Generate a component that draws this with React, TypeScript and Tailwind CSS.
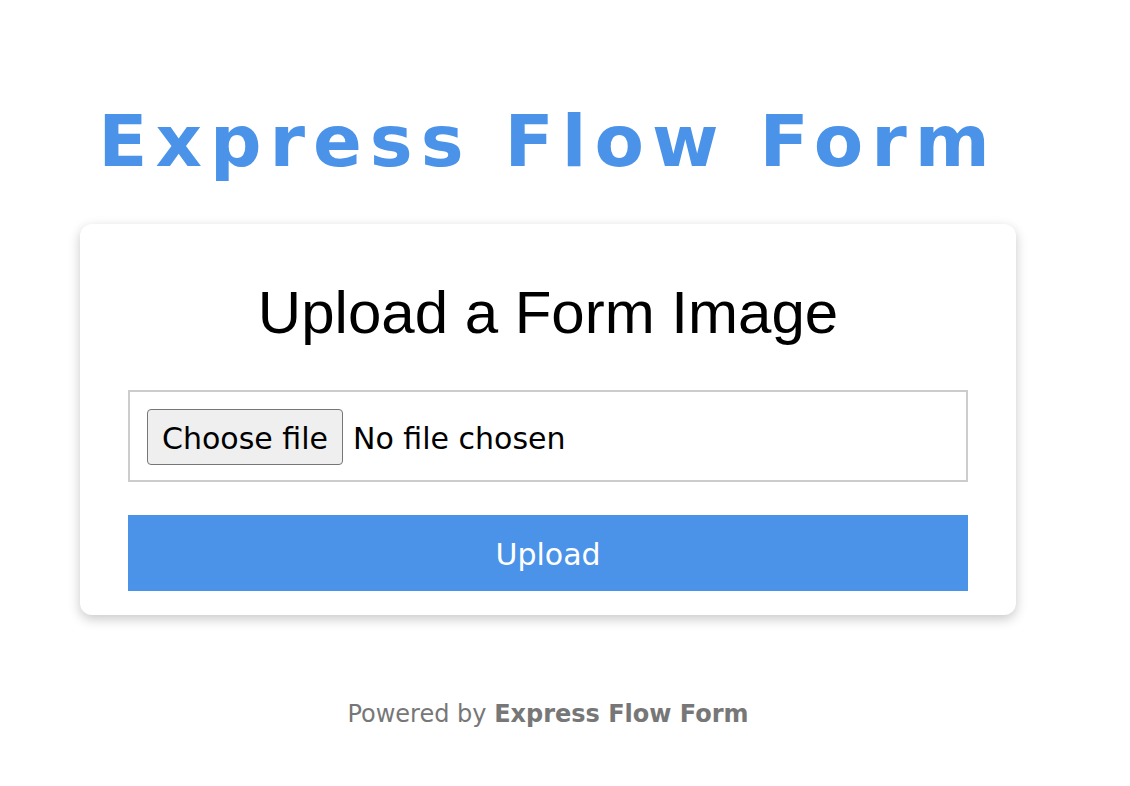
export default function App() {
  return (
    <div className="min-h-screen bg-white">
      <div className="ml-[80px] w-[936px] pt-[99px]">
        {/* Title */}
        <h1 className="mb-[41px] text-center text-[72px] leading-[84px] font-bold tracking-[8px] text-[#4a93e9] [font-family:'DejaVu_Sans',Verdana,sans-serif]">
          Express Flow Form
        </h1>

        {/* Upload card */}
        <div className="rounded-[12px] bg-white px-[48px] pt-[54px] pb-[24px] shadow-[0_4px_12px_rgba(0,0,0,0.22)]">
          <h2 className="text-center text-[60px] leading-[69px] font-normal text-black [font-family:'Liberation_Sans',Arial,sans-serif]">
            Upload a Form Image
          </h2>

          <div className="mt-[43px] flex h-[92px] items-center border-2 border-[#cccccc] px-[17px] pt-[2px] [font-family:'DejaVu_Sans',Verdana,sans-serif]">
            <span className="flex h-[56px] items-center rounded-[4px] border border-[#767676] bg-[#efefef] px-[14px] pt-[3px] text-[30px] leading-none text-black">
              Choose file
            </span>
            <span className="ml-[10px] pt-[3px] text-[30px] leading-none text-black">No file chosen</span>
          </div>

          <button className="mt-[33px] flex h-[76px] w-full items-center justify-center bg-[#4a93e9] pt-[3px] text-[30px] leading-none text-white [font-family:'DejaVu_Sans',Verdana,sans-serif]">
            Upload
          </button>
        </div>

        {/* Footer */}
        <p className="mt-[85px] text-center text-[24px] leading-[28px] text-[#777777] [font-family:'DejaVu_Sans',Verdana,sans-serif]">
          Powered by <span className="font-bold">Express Flow Form</span>
        </p>
      </div>
    </div>
  );
}
